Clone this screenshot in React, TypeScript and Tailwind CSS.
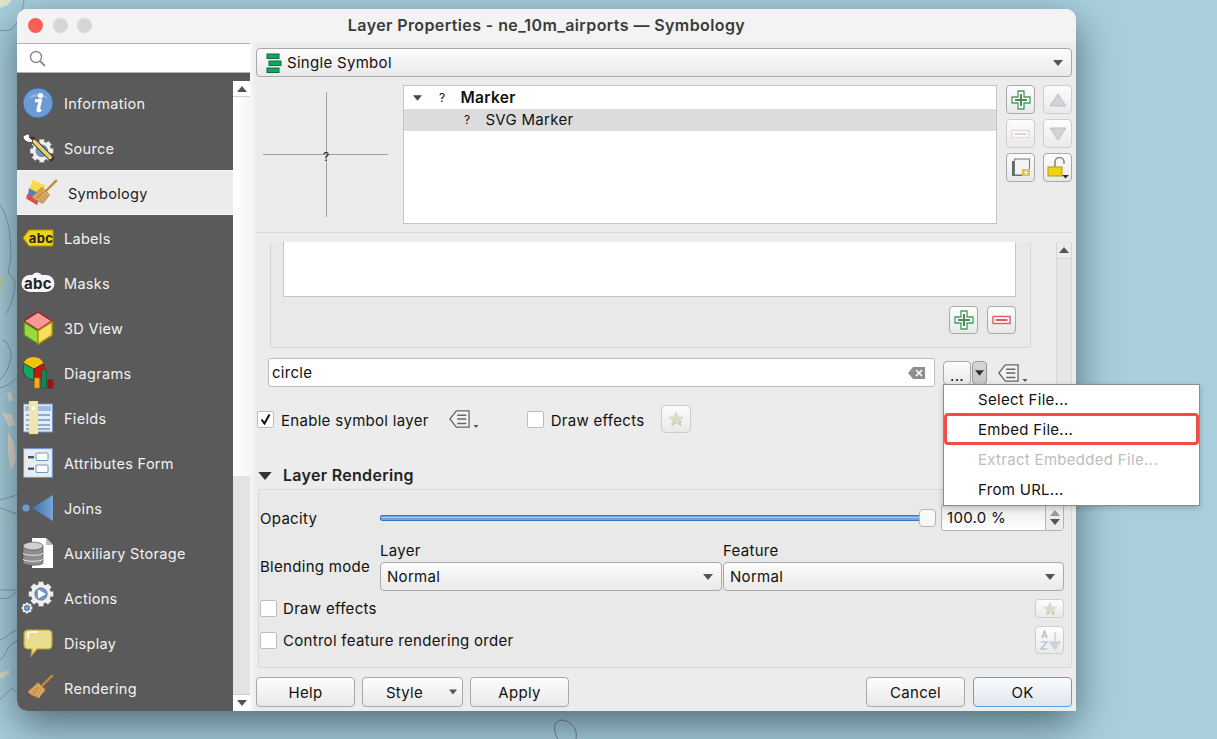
import type { ReactNode } from "react";

const FONT = "font-['Inter','Liberation_Sans',sans-serif]";

function Tri({ up, className = "" }: { up?: boolean; className?: string }) {
  return (
    <svg width="10" height="6" viewBox="0 0 10 6" className={className}>
      <path d={up ? "M0 6L5 0l5 6z" : "M0 0h10L5 6z"} fill="currentColor" />
    </svg>
  );
}

// Inter sits a little higher in its line box than the reference font
function T({ children, className = "" }: { children: ReactNode; className?: string }) {
  return <span className={`pt-[2px] ${className}`}>{children}</span>;
}

function InfoIcon() {
  return (
    <svg width="32" height="32" viewBox="0 0 32 32">
      <circle cx="16" cy="16" r="15" fill="#6b9bd1" stroke="#3a6ba5" />
      <path d="M6 12a11 9 0 0 1 20 0c-6-3-14-3-20 0z" fill="#8fb5e0" />
      <circle cx="18.5" cy="8.5" r="2.6" fill="#fff" />
      <path d="M13 14l5.5-1-2.5 10c0 1 1 1 3-.5" fill="none" stroke="#fff" strokeWidth="3.2" strokeLinejoin="round" />
    </svg>
  );
}

function Gear({ cx, cy, r, fill }: { cx: number; cy: number; r: number; fill: string }) {
  const teeth = [0, 45, 90, 135];
  return (
    <g>
      {teeth.map((a) => (
        <rect
          key={a}
          x={cx - r * 0.28}
          y={cy - r * 1.25}
          width={r * 0.56}
          height={r * 2.5}
          fill="#eee"
          stroke="#666"
          strokeWidth="0.5"
          transform={`rotate(${a} ${cx} ${cy})`}
        />
      ))}
      <circle cx={cx} cy={cy} r={r} fill="#eee" />
      <circle cx={cx} cy={cy} r={r * 0.62} fill={fill} stroke="#555" strokeWidth="0.6" />
    </g>
  );
}

function SourceIcon() {
  return (
    <svg width="32" height="30" viewBox="0 0 34 32">
      <Gear cx={21} cy={19} r={10} fill="#6b9bd1" />
      <path d="M11 7l20 20" stroke="#333" strokeWidth="6" strokeLinecap="round" />
      <path d="M13 9l17 17" stroke="#e8cf6a" strokeWidth="4" strokeLinecap="round" />
      <path d="M11 7C8 6 7 4 8 1 4 1 1 3 1 5c2 4 6 6 10 5z" fill="#fff" stroke="#222" strokeWidth="0.7" />
    </svg>
  );
}

function BroomIcon({ paper }: { paper?: boolean }) {
  return (
    <svg width="32" height="28" viewBox="0 0 34 30">
      {paper && (
        <>
          <path d="M7 1l14 6-6 10-12-6z" fill="#f2dc4c" />
          <path d="M3 10l12 6-3 7-10-6z" fill="#4a82c4" />
          <path d="M1 16l12 5-1 7-12-7z" fill="#e04a4a" />
        </>
      )}
      <path d="M19 15L32 2" stroke="#c98a2a" strokeWidth="2.6" strokeLinecap="round" />
      <path d="M17 9l8 8-7 9-9-4-3-3z" fill="#d9a866" stroke="#a8702c" strokeWidth="0.8" />
      <path d="M12 14l8 8M10 17l7 7M15 12l7 7M13 20l5-6M10 22l6-7" stroke="#a8702c" strokeWidth="0.5" />
    </svg>
  );
}

function LabelsIcon() {
  return (
    <svg width="32" height="18" viewBox="0 0 32 18">
      <path d="M7 1h24v16H7L1 9z" fill="#f2d40c" stroke="#a8920a" />
      <text x="19" y="13.5" textAnchor="middle" fontSize="13" fontWeight="700" fontFamily="Inter, sans-serif" fill="#222">abc</text>
    </svg>
  );
}

function MasksIcon() {
  return (
    <svg width="34" height="22" viewBox="0 0 34 22">
      <rect x="0.5" y="3" width="33" height="17" rx="8.5" fill="#f4f6fb" />
      <circle cx="16" cy="6" r="5.5" fill="#f4f6fb" />
      <text x="17" y="17" textAnchor="middle" fontSize="15" fontWeight="700" fontFamily="Inter, sans-serif" fill="#222">abc</text>
    </svg>
  );
}

function CubeIcon() {
  return (
    <svg width="32" height="34" viewBox="0 0 32 34">
      <path d="M16 1l14 9-14 9L2 10z" fill="#f59a9a" stroke="#a81a1a" strokeWidth="1.4" />
      <path d="M2 11l14 9v13L2 24z" fill="#9ad83c" stroke="#4e8a12" strokeWidth="1.4" />
      <path d="M30 11l-14 9v13l14-9z" fill="#f5e05a" stroke="#b8980a" strokeWidth="1.4" />
    </svg>
  );
}

function DiagramsIcon() {
  return (
    <svg width="32" height="32" viewBox="0 0 32 32">
      <circle cx="12" cy="12" r="11" fill="#10a860" stroke="#222" strokeWidth="0.6" />
      <path d="M1.5 6.5A11 11 0 0 1 21.5 6.5L12 12z" fill="#f2c40c" />
      <path d="M12 12l9.5-5.5A11 11 0 0 1 12 23z" fill="#c81414" />
      <path d="M12 12V23M12 12L2 6.5M12 12l9.5-5.5" stroke="#222" strokeWidth="0.8" />
      <rect x="12.5" y="21" width="5" height="10" fill="#f2b10c" stroke="#a87a0a" strokeWidth="0.6" />
      <rect x="19.5" y="13" width="5" height="18" fill="#10884c" stroke="#0a5a30" strokeWidth="0.6" />
      <rect x="26" y="23" width="5" height="8" fill="#a81414" stroke="#700a0a" strokeWidth="0.6" />
    </svg>
  );
}

function FieldsIcon() {
  return (
    <svg width="30" height="34" viewBox="0 0 30 34">
      <rect x="0.5" y="3" width="29" height="28" fill="#e4ecf6" stroke="#6f98c8" />
      <rect x="2" y="5" width="26" height="5" fill="#9fbce0" />
      <path d="M3 14h24M3 19h24M3 24h24M3 28h24" stroke="#6f98c8" strokeWidth="1.4" />
      <rect x="6.5" y="0.5" width="8" height="32" fill="#efe6b8" stroke="#f4ef5a" strokeWidth="1.2" />
      <rect x="9" y="5.5" width="3" height="3" fill="#fff" />
    </svg>
  );
}

function FormIcon() {
  return (
    <svg width="30" height="30" viewBox="0 0 30 30">
      <rect x="0.5" y="0.5" width="29" height="29" fill="#ececec" stroke="#6f98c8" strokeWidth="1.2" />
      <rect x="5" y="8" width="6" height="2.4" fill="#44566c" />
      <rect x="5" y="19.5" width="6" height="2.4" fill="#44566c" />
      <rect x="13" y="5" width="12" height="7.5" rx="1" fill="#fff" stroke="#6f98c8" />
      <rect x="13" y="17" width="12" height="7.5" rx="1" fill="#fff" stroke="#6f98c8" />
    </svg>
  );
}

function JoinsIcon() {
  return (
    <svg width="32" height="28" viewBox="0 0 32 28">
      <defs>
        <linearGradient id="joinFill" x1="0" x2="1">
          <stop offset="0" stopColor="#3f71ab" />
          <stop offset="1" stopColor="#78a4d6" />
        </linearGradient>
      </defs>
      <circle cx="4" cy="14" r="3.6" fill="#6b9bd1" />
      <path d="M10 14L31 1v26z" fill="url(#joinFill)" />
    </svg>
  );
}

function StorageIcon() {
  return (
    <svg width="32" height="32" viewBox="0 0 32 32">
      <path d="M10 1h14l7 7v23H10z" fill="#fff" />
      <path d="M24 1v7h7z" fill="#bbb" />
      <path d="M1 9v17c0 3 20 3 20 0V9z" fill="#8e8e8e" stroke="#444" strokeWidth="0.6" />
      <ellipse cx="11" cy="9" rx="10" ry="4" fill="#d0d0d0" stroke="#444" strokeWidth="0.6" />
      <path d="M1 16c0 3 20 3 20 0M1 22c0 3 20 3 20 0" fill="none" stroke="#e4e4e4" strokeWidth="1" />
    </svg>
  );
}

function ActionsIcon() {
  return (
    <svg width="34" height="34" viewBox="0 0 34 34">
      <Gear cx={20} cy={13} r={10} fill="#6b9bd1" />
      <path d="M17 8.5l8 4.5-8 4.5z" fill="#fff" />
      <Gear cx={6} cy={27} r={4.5} fill="#6b9bd1" />
    </svg>
  );
}

function DisplayIcon() {
  return (
    <svg width="30" height="28" viewBox="0 0 30 28">
      <path d="M5 1h20a4 4 0 0 1 4 4v11a4 4 0 0 1-4 4H14l-6 7 1-7H5a4 4 0 0 1-4-4V5a4 4 0 0 1 4-4z" fill="#e8dd90" stroke="#c0a030" strokeWidth="1.2" />
      <path d="M5 10V6c0-2 1-3 3-3h7" fill="none" stroke="#fff" strokeWidth="1.4" />
    </svg>
  );
}

function PlusIcon({ size = 20 }: { size?: number }) {
  return (
    <svg width={size} height={size} viewBox="0 0 20 20">
      <path d="M7 1h6v6h6v6h-6v6H7v-6H1V7h6z" fill="#fff" stroke="#4c9a5c" strokeWidth="1.3" />
      <path d="M10 4v12M4 10h12" stroke="#4c8a5c" strokeWidth="2" />
    </svg>
  );
}

function MinusIcon({ faded }: { faded?: boolean }) {
  return (
    <svg width="20" height="10" viewBox="0 0 20 10">
      <rect x="1" y="1.5" width="17" height="7" fill="#fff" stroke={faded ? "#e4d8d8" : "#ee5560"} strokeWidth="1.4" />
      <rect x="3.5" y="4" width="12" height="2" fill={faded ? "#dcd4d4" : "#ee5560"} />
    </svg>
  );
}

function DataIcon() {
  return (
    <span className="flex items-end">
      <svg width="21" height="20" viewBox="0 0 23 20">
        <path d="M8 1h14v18H8L1 10z" fill="#f2f2f2" stroke="#666" strokeWidth="1.4" strokeLinejoin="round" />
        <path d="M9 6h10M9 10h10M9 15h10" stroke="#666" strokeWidth="1.6" />
      </svg>
      <Tri className="ml-[3px] mb-[1px] h-[3px] w-[6px] text-[#555]" />
    </span>
  );
}

function StarIcon({ w = 18 }: { w?: number }) {
  return (
    <svg width={w} height={w} viewBox="0 0 20 20">
      <path d="M10 1l2.6 6 6.4.6-4.8 4.2 1.4 6.2L10 15l-5.6 3 1.4-6.2L1 7.6 7.4 7z" fill="#ddd9c8" />
      <path d="M6 17l3-3M15 17c-1-2-1-3 1-5" stroke="#aaa" fill="none" />
    </svg>
  );
}

function SortIcon() {
  return (
    <svg width="22" height="20" viewBox="0 0 22 20">
      <path d="M3 8l2.5-7L8 8M4 6h3" fill="none" stroke="#d4bcc4" strokeWidth="1.6" />
      <path d="M2 12h6l-6 7h6" fill="none" stroke="#bcc4d8" strokeWidth="1.6" />
      <path d="M16 2v15M11 12l5 7 5-7z" fill="#cfd4d8" stroke="#cfd4d8" strokeWidth="1.6" />
    </svg>
  );
}

type Tone = "normal" | "disabled" | "focus" | "pressed";

const TONES: Record<Tone, string> = {
  normal: "border-[#a9a9a9] from-[#fdfdfd] to-[#e9e9e9]",
  disabled: "border-[#cdcdcd] from-[#fdfdfd] to-[#e9e9e9]",
  focus: "border-[#5c9eea] from-[#fafbfd] to-[#dfe5ee]",
  pressed: "border-[#9a9a9a] from-[#d8d8d8] to-[#c4c4c4]",
};

function Btn({
  className = "",
  children,
  tone = "normal",
  between,
}: {
  className?: string;
  children?: ReactNode;
  tone?: Tone;
  between?: boolean;
}) {
  return (
    <div
      className={`flex items-center rounded-[4px] border bg-gradient-to-b text-[15px] text-[#111] ${
        between ? "justify-between" : "justify-center"
      } ${TONES[tone]} ${className}`}
    >
      {children}
    </div>
  );
}

function Combo({ className = "", children }: { className?: string; children: ReactNode }) {
  return (
    <Btn between className={`pl-[6px] pr-[8px] ${className}`}>
      <span className="flex items-center">{children}</span>
      <Tri className="text-[#555]" />
    </Btn>
  );
}

function Check({ checked }: { checked?: boolean }) {
  return (
    <span className="flex h-[17px] w-[17px] shrink-0 items-center justify-center rounded-[2px] border border-[#bdbdbd] bg-white">
      {checked && (
        <svg width="11" height="12" viewBox="0 0 11 12">
          <path d="M1.5 6.5l3 4 5-9" fill="none" stroke="#111" strokeWidth="2" />
        </svg>
      )}
    </span>
  );
}

const NAV: { label: string; icon: ReactNode; active?: boolean }[] = [
  { label: "Information", icon: <InfoIcon /> },
  { label: "Source", icon: <SourceIcon /> },
  { label: "Symbology", icon: <BroomIcon paper />, active: true },
  { label: "Labels", icon: <LabelsIcon /> },
  { label: "Masks", icon: <MasksIcon /> },
  { label: "3D View", icon: <CubeIcon /> },
  { label: "Diagrams", icon: <DiagramsIcon /> },
  { label: "Fields", icon: <FieldsIcon /> },
  { label: "Attributes Form", icon: <FormIcon /> },
  { label: "Joins", icon: <JoinsIcon /> },
  { label: "Auxiliary Storage", icon: <StorageIcon /> },
  { label: "Actions", icon: <ActionsIcon /> },
  { label: "Display", icon: <DisplayIcon /> },
  { label: "Rendering", icon: <BroomIcon /> },
];

function SideScroll() {
  return (
    <div className="flex w-[17px] shrink-0 flex-col pt-[8px]">
      <div className="flex h-[16px] shrink-0 items-center justify-center border-b border-[#d0d0d0] bg-white text-[#555]">
        <Tri up />
      </div>
      <div className="h-[379px] shrink-0 bg-gradient-to-r from-white to-[#f6f6f6]" />
      <div className="flex-1 bg-[#e3e3e3]" />
      <div className="flex h-[17px] shrink-0 items-center justify-center border-t border-[#d0d0d0] bg-white text-[#555]">
        <Tri />
      </div>
    </div>
  );
}

function Sidebar() {
  return (
    <div className="flex w-[233px] shrink-0 flex-col">
      <div className="flex h-[30px] shrink-0 items-center border-y border-[#b4b4b4] bg-white pl-[12px]">
        <svg width="17" height="17" viewBox="0 0 17 17">
          <circle cx="7" cy="7" r="5.5" fill="none" stroke="#8a8a8a" strokeWidth="1.4" />
          <path d="M11 11l5 5" stroke="#8a8a8a" strokeWidth="1.8" />
        </svg>
      </div>
      <div className="flex min-h-0 flex-1 overflow-hidden rounded-bl-[10px] bg-[#5a5a5a]">
        <div className="flex w-[216px] shrink-0 flex-col pt-[7px]">
          {NAV.map((item) => (
            <div
              key={item.label}
              className={`flex h-[45px] shrink-0 items-center text-[14.5px] ${
                item.active
                  ? "border-y border-[#f7f7f7] bg-[#ececec] pl-[4px] text-[#1c1c1c]"
                  : "text-[#f2f2f2]"
              }`}
            >
              <span className="flex w-[42px] shrink-0 items-center justify-center">{item.icon}</span>
              <T className="ml-[5px]">{item.label}</T>
            </div>
          ))}
        </div>
        <SideScroll />
      </div>
    </div>
  );
}

function SymbolRow() {
  return (
    <div className="mt-[8px] flex h-[139px] shrink-0">
      <div className="relative ml-[7px] w-[125px] shrink-0">
        <span className="absolute left-[63px] top-[7px] h-[125px] w-px bg-[#a0a0a0]" />
        <span className="absolute left-0 top-[69px] h-px w-[125px] bg-[#a0a0a0]" />
        <span className="absolute left-[60px] top-[65px] text-[12px] leading-[14px] text-[#222]">?</span>
      </div>
      <div className="ml-[15px] h-[139px] w-[594px] shrink-0 border border-[#c4c4c4] bg-white">
        <div className="flex h-[23px] items-center pl-[9px] text-[15px] text-[#111]">
          <Tri className="w-[9px] text-[#444]" />
          <span className="ml-[17px] text-[12px]">?</span>
          <span className="ml-[15px] text-[15.5px] font-semibold">Marker</span>
        </div>
        <div className="flex h-[22px] items-center bg-[#dcdcdc] pl-[60px] text-[15px] text-[#111]">
          <span className="text-[12px]">?</span>
          <span className="ml-[15px]">SVG Marker</span>
        </div>
      </div>
      <div className="ml-[9px] grid h-[97px] grid-cols-[29px_29px] grid-rows-[29px_29px_29px] gap-x-[8px] gap-y-[5px]">
        <Btn><PlusIcon /></Btn>
        <Btn tone="disabled">
          <svg width="18" height="14" viewBox="0 0 18 14"><path d="M9 1l8 12H1z" fill="#cfd4d8" stroke="#bcc0c4" /></svg>
        </Btn>
        <Btn tone="disabled"><MinusIcon faded /></Btn>
        <Btn tone="disabled">
          <svg width="18" height="14" viewBox="0 0 18 14"><path d="M9 13l8-12H1z" fill="#cfd4d8" stroke="#bcc0c4" /></svg>
        </Btn>
        <Btn>
          <svg width="20" height="19" viewBox="0 0 20 19">
            <path d="M1 3h2v14h13v1H1z" fill="#666" />
            <rect x="3.5" y="1" width="15" height="16" fill="#f4f4f4" stroke="#777" />
            <rect x="11" y="11" width="8" height="7" fill="#e2c23a" />
            <path d="M15 12v5M13 14.5h4" stroke="#fff" />
          </svg>
        </Btn>
        <Btn>
          <svg width="22" height="22" viewBox="0 0 22 22">
            <path d="M8 10V5a4.5 4.5 0 0 1 9 0v2" fill="none" stroke="#888" strokeWidth="1.6" />
            <rect x="1" y="10" width="14" height="9" fill="#f2d40c" stroke="#b89a0a" />
            <path d="M15 18h7l-3.5 3.5z" fill="#333" />
          </svg>
        </Btn>
      </div>
    </div>
  );
}

function ScrollArea() {
  return (
    <div className="mt-[8px] flex h-[230px] shrink-0 border-t border-[#dadada]">
      <div className="w-[800px] shrink-0">
        <div className="ml-[14px] mt-[9px] h-[106px] w-[761px] rounded-b-[3px] border-x border-b border-[#d6d6d6] bg-[#e9e9e9] pl-[12px] pr-[14px]">
          <div className="h-[55px] border-x border-b border-[#c4c4c4] bg-white" />
          <div className="mt-[9px] flex justify-end gap-[9px]">
            <Btn className="h-[28px] w-[29px]"><PlusIcon /></Btn>
            <Btn className="h-[28px] w-[29px]"><MinusIcon /></Btn>
          </div>
        </div>
        <div className="mt-[10px] flex items-center">
          <div className="ml-[12px] flex h-[29px] w-[667px] items-center justify-between rounded-[3px] border border-[#bdbdbd] bg-white pl-[3px] pr-[9px] text-[15px] text-[#111]">
            <T>circle</T>
            <svg width="17" height="12" viewBox="0 0 17 12">
              <path d="M5 0h12v12H5L0 6z" fill="#8e8e8e" />
              <path d="M8 3l6 6M14 3l-6 6" stroke="#fff" strokeWidth="1.6" />
            </svg>
          </div>
          <Btn className="ml-[8px] h-[24px] w-[28px] items-end pb-[3px] text-[11px] leading-[10px]">...</Btn>
          <Btn tone="pressed" className="ml-[1px] h-[24px] w-[15px] text-[#333]">
            <Tri className="w-[9px]" />
          </Btn>
          <span className="ml-[11px]"><DataIcon /></span>
        </div>
        <div className="mt-[18px] flex h-[28px] items-center pl-[1px] text-[15px] text-[#111]">
          <Check checked />
          <span className="ml-[7px] pt-[5px]">Enable symbol layer</span>
          <span className="ml-[20px]"><DataIcon /></span>
          <span className="ml-[48px]"><Check /></span>
          <span className="ml-[7px] pt-[5px]">Draw effects</span>
          <Btn tone="disabled" className="ml-[17px] h-[28px] w-[30px]"><StarIcon /></Btn>
        </div>
      </div>
      <div className="mt-[9px] flex w-[16px] shrink-0 flex-col border-x border-[#d8d8d8]">
        <div className="flex h-[16px] shrink-0 items-center justify-center text-[#555]"><Tri up /></div>
        <div className="flex-1 border-t border-[#d8d8d8] bg-[#e6e6e6]" />
      </div>
    </div>
  );
}

function RenderingBox() {
  return (
    <div className="ml-[2px] mt-[5px] h-[179px] shrink-0 rounded-[2px] border border-[#d8d8d8] bg-[#e9e9e9] pl-[1px] pr-[7px] text-[15px] text-[#111]">
      <div className="mt-[14px] flex h-[27px] items-center">
        <span className="w-[120px] shrink-0 pt-[3px]">Opacity</span>
        <div className="relative h-[6px] w-[548px] shrink-0 rounded-[2px] border border-[#3f74bd] bg-[#6ea2e6]">
          <span className="absolute inset-x-0 top-[1px] h-px bg-[#a8c8f0]" />
        </div>
        <span className="z-10 -ml-[9px] h-[18px] w-[17px] shrink-0 rounded-[4px] border border-[#b4b4b4] bg-[#f8f8f8]" />
        <div className="ml-[5px] flex h-[27px] flex-1 items-center rounded-[3px] border border-[#b4b4b4] bg-gradient-to-b from-[#e8e8e8] to-white">
          <span className="flex-1 pl-[5px] pt-[1px]">100.0 %</span>
          <span className="flex h-full w-[18px] flex-col items-center justify-center gap-[3px] border-l border-[#b4b4b4] bg-[#ececec]">
            <Tri up className="text-[#999]" />
            <Tri className="text-[#555]" />
          </span>
        </div>
      </div>
      <div className="mt-[11px] flex h-[48px]">
        <span className="flex w-[120px] shrink-0 items-center pt-[2px]">Blending mode</span>
        <div className="w-[343px] shrink-0">
          <div className="h-[20px] leading-[17px]">Layer</div>
          <Combo className="h-[29px] w-[342px]"><T>Normal</T></Combo>
        </div>
        <div className="flex-1">
          <div className="h-[20px] leading-[17px]">Feature</div>
          <Combo className="h-[29px]"><T>Normal</T></Combo>
        </div>
      </div>
      <div className="mt-[8px] flex h-[21px] items-center">
        <Check />
        <T className="ml-[6px] flex-1">Draw effects</T>
        <Btn tone="disabled" className="h-[19px] w-[29px]"><StarIcon w={16} /></Btn>
      </div>
      <div className="mt-[7px] flex h-[28px] items-center">
        <Check />
        <T className="ml-[6px] flex-1">Control feature rendering order</T>
        <Btn tone="disabled" className="h-[28px] w-[29px]"><SortIcon /></Btn>
      </div>
    </div>
  );
}

function FooterButtons() {
  return (
    <div className="mt-[9px] flex h-[30px] shrink-0">
      <Btn className="w-[99px]"><T>Help</T></Btn>
      <Btn className="relative ml-[7px] w-[101px] pr-[16px]">
        <T>Style</T>
        <Tri className="absolute right-[5px] top-[11px] w-[8px] text-[#555]" />
      </Btn>
      <Btn className="ml-[7px] w-[99px]"><T>Apply</T></Btn>
      <div className="flex-1" />
      <Btn className="w-[99px]"><T>Cancel</T></Btn>
      <Btn tone="focus" className="ml-[8px] w-[99px]"><T>OK</T></Btn>
    </div>
  );
}

function FileMenu() {
  const items = [
    { label: "Select File..." },
    { label: "Embed File..." },
    { label: "Extract Embedded File...", disabled: true },
    { label: "From URL..." },
  ];
  return (
    <div className="absolute left-[943px] top-[384px] z-20 w-[257px] border border-[#8c8c8c] bg-white text-[15px] text-[#111] shadow-[0_2px_6px_rgba(0,0,0,0.2)]">
      {items.map((item) => (
        <div
          key={item.label}
          className={`flex h-[30px] items-center pl-[34px] ${item.disabled ? "text-[#bdbdbd]" : ""}`}
        >
          {item.label}
        </div>
      ))}
      <span className="absolute left-0 top-[28px] h-[32px] w-[255px] rounded-[4px] border-[3px] border-[#f24b4b]" />
    </div>
  );
}

export default function App() {
  return (
    <div className={`relative h-[739px] w-[1217px] overflow-hidden bg-[#a9cfdd] pl-[17px] pt-[9px] tracking-[0.3px] ${FONT}`}>
      {/* map underneath the dialog */}
      <svg className="absolute left-0 top-0" width="1217" height="739" viewBox="0 0 1217 739">
        <path d="M0 0h12l-4 5-8 3z" fill="#dfe6c8" />
        <path d="M24 0c-1 10-6 24-12 29-4 2-8 2-12 1M0 205c4 5 7 15 9 22 1 14 3 24 1 36l-2 10c3 2 6 5 7 10 0 12-5 26-10 32M2 340c4 0 7 6 9 12 1 10-5 22-11 28M17 378c-4 4-10 8-17 10" fill="none" stroke="#8a94ac" strokeWidth="1" />
        <path d="M0 276l5-2-1 12-4 7z" fill="#b9cdb2" />
        <path d="M7 392l4 1 2 8H9zM2 412l10 3 3 10-6 2zM8 432l6 10 2 18-5 10-3-16z" fill="#e6ddd0" />
        <path d="M0 500l17-5M0 508l17 6M0 590h17M0 598c6 2 10 0 16-6M0 640c7-2 8-6 13-8l4-2M0 660c6-4 5-10 12-16 3-2 4-2 5-3M0 700c3-4 8-8 12-12l5 4" fill="none" stroke="#8a94ac" strokeWidth="1" />
        <path d="M8 527l6-8-2 5z" fill="#d8dfa8" />
        <path d="M0 673l9-3 1 3-7 5-3 1z" fill="#e0dcc0" />
        <path d="M558 739c-6-10-4-19 4-19 10 1 16 10 14 19" fill="none" stroke="#6f7f92" strokeWidth="1" />
      </svg>

      <div className="relative flex h-[702px] w-[1059px] flex-col rounded-[10px] bg-[#ececec] shadow-[0_14px_40px_rgba(20,40,50,0.6)]">
        <div className="relative flex h-[34px] shrink-0 items-center justify-center rounded-t-[10px] bg-[#f3f3f3] pb-[2px] text-[16px] font-semibold tracking-[0.4px] text-[#3a3a3a]">
          <div className="absolute left-[11px] top-[9px] flex gap-[9.5px]">
            <span className="h-[15px] w-[15px] rounded-full bg-[#f95f57]" />
            <span className="h-[15px] w-[15px] rounded-full bg-[#d6d6d6]" />
            <span className="h-[15px] w-[15px] rounded-full bg-[#d6d6d6]" />
          </div>
          Layer Properties - ne_10m_airports — Symbology
        </div>

        <div className="flex min-h-0 flex-1">
          <Sidebar />
          <div className="flex min-w-0 flex-1 flex-col bg-gradient-to-r from-[#f8f8f8] to-[#ececec] to-[6px] pl-[6px] pr-[4px]">
            <Combo className="mt-[5px] h-[29px] shrink-0">
              <svg width="16" height="20" viewBox="0 0 16 20" className="ml-[3px] mr-[5px]">
                <rect x="1" y="1" width="12" height="4.5" fill="#10a860" stroke="#0a6a3a" />
                <rect x="3" y="8" width="12" height="4.5" fill="#10a860" stroke="#0a6a3a" />
                <rect x="1" y="15" width="12" height="4.5" fill="#10a860" stroke="#0a6a3a" />
              </svg>
              <T>Single Symbol</T>
            </Combo>
            <SymbolRow />
            <ScrollArea />
            <div className="mt-[5px] flex h-[17px] shrink-0 items-center pl-[2px] text-[16px] font-semibold text-[#222]">
              <Tri className="h-[8px] w-[14px] text-[#333]" />
              <span className="ml-[11px] pb-[2px]">Layer Rendering</span>
            </div>
            <RenderingBox />
            <FooterButtons />
          </div>
        </div>
      </div>
      <FileMenu />
    </div>
  );
}
